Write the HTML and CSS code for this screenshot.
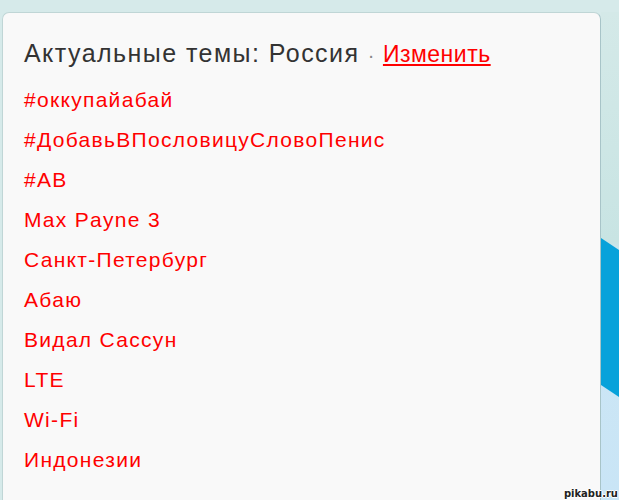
FILE: index.html
```html
<!DOCTYPE html>
<html lang="ru">
<head>
<meta charset="utf-8">
<link rel="stylesheet" href="styles.css">
</head>
<body>
<div class="page">
  <div class="card">
    <h2 class="title">Актуальные темы: Россия <span class="dot">·</span> <a class="change" href="#">Изменить</a></h2>
    <ul class="trends">
      <li><a href="#">#оккупайабай</a></li>
      <li><a href="#">#ДобавьВПословицуСловоПенис</a></li>
      <li><a href="#">#АВ</a></li>
      <li><a href="#">Max Payne 3</a></li>
      <li><a href="#">Санкт-Петербург</a></li>
      <li><a href="#">Абаю</a></li>
      <li><a href="#">Видал Сассун</a></li>
      <li><a href="#">LTE</a></li>
      <li><a href="#">Wi-Fi</a></li>
      <li><a href="#">Индонезии</a></li>
    </ul>
  </div>
  <div class="side">
    <div class="band"></div>
  </div>
</div>
<div class="watermark">pikabu.ru</div>
</body>
</html>
```
FILE: styles.css
```css
html, body { margin: 0; padding: 0; }
body {
  width: 619px; height: 500px; overflow: hidden; position: relative;
  background: #d6eaea;
  font-family: Arial, "Liberation Sans", sans-serif;
}
.page { display: flex; height: 500px; padding-top: 12px; padding-left: 2px; box-sizing: border-box; }
.card {
  width: 599px; box-sizing: border-box;
  background: #f9f9f9;
  border: 1px solid #c0d6d6;
  border-right-color: #a8c4c8;
  border-bottom: none;
  border-radius: 7px 7px 0 0;
  padding: 22px 0 0 21px;
}
.title { margin: 0; font-weight: normal; font-size: 25px; letter-spacing: 1.45px; color: #333; line-height: 36px; }
.dot { color: #888; font-size: 20px; letter-spacing: 0; }
.change { color: #f00; font-size: 23px; letter-spacing: 0.5px; text-decoration: underline; }
.trends { list-style: none; margin: 7px 0 0; padding: 0; }
.trends li { height: 40px; font-size: 21px; letter-spacing: 1.3px; line-height: 40px; }
.trends a { color: #f00; text-decoration: none; }
.side { flex: 1; position: relative; background: linear-gradient(#d4e9e8 0, #c8e4e3 230px, #cde6f4 240px, #c9e5f6 100%); }
.band {
  position: absolute; inset: 0;
  background: #08a2da;
  clip-path: polygon(0 226px, 100% 238px, 100% 385px, 0 373px);
}
.watermark {
  position: absolute; right: 1px; bottom: 0;
  font-family: "DejaVu Sans", sans-serif; font-size: 10px; font-weight: bold; color: #222;
  text-shadow: 1px 0 #fff, -1px 0 #fff, 0 1px #fff, 0 -1px #fff;
  line-height: 12px;
}
```
